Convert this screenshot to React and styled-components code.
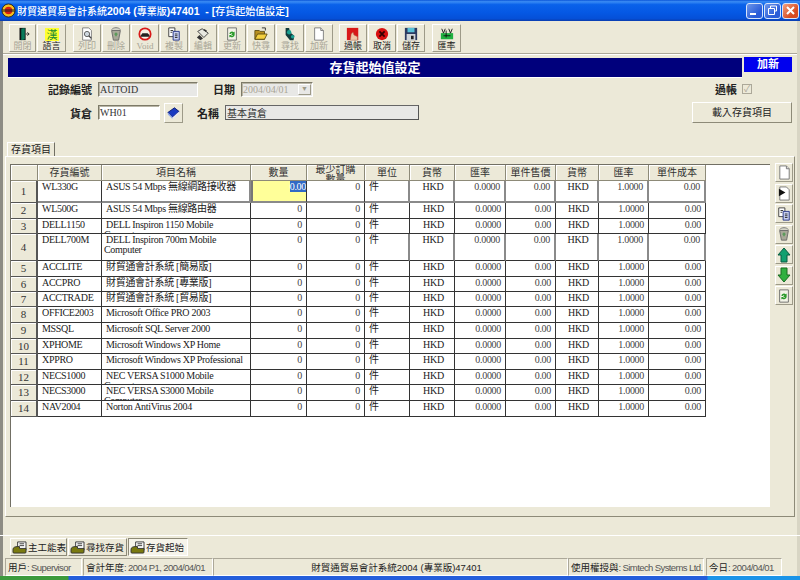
import React from "react";
import styled, { createGlobalStyle } from "styled-components";

const GlobalStyle = createGlobalStyle`
  html, body {
    margin: 0;
    padding: 0;
    width: 800px;
    height: 580px;
    overflow: hidden;
    background: #ece9d8;
  }
  * {
    box-sizing: border-box;
  }
`;

const SERIF = `"Liberation Serif", "Noto Sans CJK TC", serif`;
const SANS = `"Liberation Sans", "Noto Sans CJK TC", sans-serif`;

const Window = styled.div`
  display: flex;
  flex-direction: column;
  width: 800px;
  height: 580px;
  background: #ece9d8;
  font-family: ${SANS};
  font-size: 11px;
  color: #222;
  border-left: 3px solid #8d8c84;
  border-right: 3px solid #d8d5c4;
`;

const TitleBar = styled.div`
  display: flex;
  align-items: center;
  flex: 0 0 21px;
  margin: 0 -3px;
  padding: 0 0 0 1px;
  gap: 1px;
  background: linear-gradient(
    180deg,
    #0a55d8 0%,
    #3a8cf4 8%,
    #0a62ea 22%,
    #0558e4 60%,
    #0550d8 88%,
    #0a3cae 100%
  );
`;

const TitleText = styled.div`
  flex: 1;
  color: #fff;
  font-family: ${SANS};
  font-weight: bold;
  font-size: 10.5px;
  white-space: pre;
`;

const TitleZh = styled.span`
  font-size: 10px;
  font-weight: 500;
`;

const WinControls = styled.div`
  display: flex;
  gap: 1px;
  padding-right: 1px;
`;

const WinButton = styled.div`
  display: flex;
  align-items: center;
  justify-content: center;
  width: 17px;
  height: 16px;
  border: 1px solid #d8e4fa;
  border-radius: 3px;
  background: ${(p) =>
    p.$close
      ? "linear-gradient(135deg, #f0a080, #d84a20 70%)"
      : "linear-gradient(135deg, #6c96ea, #2a5cd8 70%)"};
`;

const Toolbar = styled.div`
  display: flex;
  flex: 0 0 33px;
  padding: 3px 0 0 6px;
  border-bottom: 1px solid #aca899;
  box-shadow: 0 1px 0 #fff;
`;

const ToolGroup = styled.div`
  display: flex;
  gap: 1px;
  margin-right: ${(p) => p.$gap || 0}px;
`;

const ToolButton = styled.div`
  display: flex;
  flex-direction: column;
  align-items: center;
  width: ${(p) => p.$w || 28}px;
  height: 28px;
  padding-top: 2px;
  background: #ece9d8;
  border: 1px solid;
  border-color: #fff #9d9a88 #9d9a88 #fff;
`;

const ToolIcon = styled.div`
  display: flex;
  align-items: center;
  justify-content: center;
  height: 14px;
`;

const ToolLabel = styled.span`
  margin-top: 1px;
  font-family: ${SERIF};
  font-size: 9px;
  line-height: 9px;
  color: ${(p) => (p.$off ? "#a8a596" : "#222")};
`;

const TitleRow = styled.div`
  display: flex;
  align-items: flex-start;
  height: 24px;
  padding: 3px 0 0 5px;
`;

const Banner = styled.div`
  width: 734px;
  height: 20px;
  margin-top: 1px;
  background: #00007c;
  border-bottom: 1px solid #fff;
  color: #fff;
  font-family: ${SERIF};
  font-weight: bold;
  font-size: 13px;
  line-height: 19px;
  text-align: center;
`;

const ModeBadge = styled.div`
  width: 48px;
  height: 15px;
  margin-left: 2px;
  background: #0000ee;
  color: #fff;
  font-family: ${SERIF};
  font-weight: bold;
  font-size: 11px;
  line-height: 14px;
  text-align: center;
`;

const FormRow = styled.div`
  display: flex;
  align-items: center;
  height: ${(p) => p.$h}px;
  padding-right: 5px;
`;

const FieldLabel = styled.span`
  width: ${(p) => p.$w}px;
  margin-right: ${(p) => p.$mr || 6}px;
  text-align: right;
  font-family: ${SERIF};
  font-weight: bold;
  font-size: 11px;
  flex: none;
`;

const Field = styled.div`
  display: flex;
  align-items: center;
  flex: none;
  width: ${(p) => p.$w}px;
  height: 15px;
  margin-right: ${(p) => p.$mr || 0}px;
  padding-left: 1px;
  background: ${(p) => (p.$white ? "#fff" : "#e8e8e6")};
  border: 1px solid;
  border-color: #7d7a68 #fff #fff #7d7a68;
  box-shadow: inset 1px 1px 0 #b8b5a6;
  color: ${(p) => (p.$muted ? "#a8a596" : "#333")};
  font-family: ${SERIF};
  font-size: 10px;
  white-space: nowrap;
`;

const NameField = styled(Field)`
  border-color: #666 #555 #555 #666;
  box-shadow: none;
`;

const DateArrow = styled.span`
  display: flex;
  align-items: center;
  justify-content: center;
  width: 13px;
  height: 11px;
  margin-left: auto;
  margin-right: 1px;
  border: 1px solid;
  border-color: #fff #9d9a88 #9d9a88 #fff;
  color: #9d9a88;
  font-size: 7px;
`;

const Spacer = styled.div`
  flex: 1;
`;

const LookupButton = styled.div`
  display: flex;
  align-items: center;
  justify-content: center;
  width: 19px;
  height: 20px;
  margin: 0 14px 0 4px;
  border: 1px solid;
  border-color: #fff #9d9a88 #9d9a88 #fff;
`;

const CheckBox = styled.div`
  display: flex;
  align-items: center;
  justify-content: center;
  width: 10px;
  height: 10px;
  margin-right: 40px;
  background: #ece9d8;
  border: 1px solid #aca899;
  color: #aca899;
  font-size: 9px;
  line-height: 9px;
`;

const LoadButton = styled.div`
  width: 100px;
  height: 21px;
  border: 1px solid;
  border-color: #fff #8d8a78 #8d8a78 #fff;
  text-align: center;
  font-family: ${SERIF};
  font-size: 10px;
  line-height: 19px;
`;

const TabStrip = styled.div`
  display: flex;
  height: 14px;
  margin-top: 17px;
  padding-left: 4px;
`;

const Tab = styled.div`
  width: 48px;
  height: 14px;
  padding-left: 3px;
  border-right: 1px solid #716f64;
  border-left: 1px solid #fff;
  border-top: 1px solid #fff;
  font-family: ${SERIF};
  font-size: 10px;
  line-height: 13px;
  white-space: nowrap;
`;

const TabPanel = styled.div`
  display: flex;
  flex: none;
  height: 361px;
  margin: 0 2px;
  padding: 7px 2px 9px 4px;
  border: 1px solid;
  border-color: #fff #8d8a78 #8d8a78 #fff;
`;

const Sheet = styled.div`
  flex: none;
  width: 760px;
  height: 343px;
  background: #fff;
  border-top: 1px solid #716f64;
  border-left: 1px solid #716f64;
`;

const Row = styled.div`
  display: grid;
  grid-template-columns: 27px 64px 149px 56px 58px 45px 45px 51px 50px 43px 50px 57px;
  width: 695px;
  height: ${(p) => p.$h}px;
`;

const HeadCell = styled.div`
  overflow: hidden;
  padding: 0 ${(p) => (p.$tall ? "4px" : "0")};
  background: #ece9d8;
  border-right: 1px solid #8d8a78;
  border-bottom: 1px solid #8d8a78;
  box-shadow: inset 1px 1px 0 #fff;
  font-family: ${SERIF};
  font-size: 10px;
  line-height: ${(p) => (p.$tall ? "10px" : "15px")};
  text-align: center;
  color: #333;
`;

const RowHead = styled(HeadCell)`
  display: flex;
  align-items: center;
  justify-content: center;
  border-right: 2px solid #555;
  border-bottom: 1px solid #555;
  font-size: 11px;
`;

const Cell = styled.div`
  overflow: hidden;
  padding: 1px ${(p) => (p.$right ? "4px" : "0")} 0 ${(p) => p.$left ?? 3}px;
  border-right: ${(p) => (p.$soft ? "2px solid #8a8a8a" : "1px solid #333")};
  border-bottom: ${(p) => (p.$softRow ? "2px solid #8a8a8a" : "1px solid #333")};
  font-family: ${SERIF};
  font-size: 10px;
  letter-spacing: -0.3px;
  line-height: 10px;
  text-align: ${(p) => (p.$right ? "right" : p.$center ? "center" : "left")};
  text-indent: ${(p) => p.$indent || 0}px;
  color: ${(p) => (p.$zero ? "#444" : "#222")};
`;

const ActiveCell = styled(Cell)`
  background: #ffff99;
  border-left: 2px solid #777;
  border-bottom: 2px solid #8a8a8a;
  padding-right: 0;
`;

const Selection = styled.span`
  background: #316ac5;
  color: #fff;
`;

const SideButtons = styled.div`
  display: flex;
  flex-direction: column;
  gap: 1.5px;
  margin: -1px 0 0 5px;
`;

const SideButton = styled.div`
  display: flex;
  align-items: center;
  justify-content: center;
  width: 18px;
  height: 19px;
  border: 1px solid;
  border-color: #fff #9d9a88 #9d9a88 #fff;
`;

const DocBar = styled.div`
  display: flex;
  align-items: center;
  gap: 1px;
  flex: 0 0 23px;
  margin: 18px -3px 0;
  padding-left: 10px;
  border-top: 1px solid #fff;
`;

const DocTab = styled.div`
  display: flex;
  align-items: center;
  gap: 1px;
  width: ${(p) => p.$w}px;
  height: 18px;
  padding-left: 1px;
  background: ${(p) => (p.$active ? "#f6f4ea" : "#ece9d8")};
  border: 1px solid;
  border-color: ${(p) =>
    p.$active ? "#8d8a78 #fff #fff #8d8a78" : "#fff #8d8a78 #8d8a78 #fff"};
  font-family: ${SERIF};
  font-size: 9.5px;
  white-space: nowrap;
`;

const StatusBar = styled.div`
  display: flex;
  flex: 0 0 18px;
  margin: 0 -3px;
  padding-left: 5px;
`;

const StatusCell = styled.div`
  flex: ${(p) => (p.$grow ? 1 : "none")};
  width: ${(p) => p.$w}px;
  height: 18px;
  margin-right: ${(p) => p.$mr || 0}px;
  padding-left: ${(p) => (p.$grow ? "12px" : "2px")};
  border: 1px solid;
  border-color: #aca899 #fff #fff #aca899;
  color: #555;
  font-size: 9.5px;
  letter-spacing: -0.6px;
  line-height: 17px;
  white-space: nowrap;
  overflow: hidden;
  text-align: ${(p) => (p.$grow ? "center" : "left")};
`;

const StatusZh = styled.span`
  color: #222;
  letter-spacing: 0;
`;

const Taskbar = styled.div`
  flex: 0 0 4px;
  margin: 0 -3px;
  background: linear-gradient(
    90deg,
    #3c9a3c 0,
    #3c9a3c 68px,
    #245edb 69px,
    #245edb 707px,
    #1b94e8 708px
  );
`;

const Svg = ({ size = 16, children }) => (
  <svg width={size} height={size} viewBox="0 0 16 16">
    {children}
  </svg>
);

const AppIcon = () => (
  <Svg size={15}>
    <circle cx="8" cy="8" r="7" fill="#f4c020" stroke="#222" />
    <circle cx="8" cy="8" r="4" fill="#d82010" />
    <rect x="1" y="6.500" width="14" height="3" fill="#222" opacity="0.55" />
  </Svg>
);

const DoorIcon = () => (
  <Svg size={14}>
    <path d="M4 1h7v14H4z" fill="#111" />
    <path d="M6 2l4-1v13l-4 1z" fill="#0a7a5a" />
    <path d="M11 8h4M13 6l2 2-2 2" stroke="#222" fill="none" />
  </Svg>
);

const LangIcon = () => (
  <svg width="14" height="13" viewBox="0 0 14 13">
    <rect width="14" height="13" fill="#ffff30" />
    <text x="7" y="11" fontSize="11" textAnchor="middle" fill="#1a8a30" fontFamily={SANS}>
      漢
    </text>
  </svg>
);

const PrintIcon = () => (
  <Svg size={14}>
    <path d="M3 1h7l3 3v11H3z" fill="#fff" stroke="#777" />
    <circle cx="8" cy="8" r="3" fill="#cfd8e0" stroke="#555" />
    <path d="M10 10l3 3" stroke="#444" strokeWidth="1.500" />
  </Svg>
);

const TrashIcon = () => (
  <Svg size={14}>
    <path d="M3 4l2 11h6l2-11z" fill="#a8a898" stroke="#666" />
    <path d="M3 3c2-3 8-3 10 0" fill="#d0d0c4" stroke="#777" />
    <path d="M6 8l2-2 2 2-2 3z" fill="#5a9a5a" />
  </Svg>
);

const VoidIcon = () => (
  <Svg size={14}>
    <circle cx="8" cy="8" r="6.500" fill="#f4f0e4" stroke="#d81818" strokeWidth="2" />
    <path d="M3 10l2-3h6l2 2v2H3z" fill="#222" />
  </Svg>
);

const CopyIcon = () => (
  <Svg size={14}>
    <path d="M2 1h7v10H2z" fill="#fff" stroke="#333" />
    <path d="M7 5h7v10H7z" fill="#c8d0f0" stroke="#1a2a80" />
    <path d="M4 4h3M4 6h2M9 8h3M9 10h3M9 12h3" stroke="#222" />
  </Svg>
);

const EditIcon = () => (
  <Svg size={14}>
    <path d="M2 5l5-3 7 5-5 5z" fill="#e8e8e0" stroke="#333" />
    <path d="M4 9l4 4-3 2-4-3z" fill="#333" />
    <path d="M9 3l3 2" stroke="#333" strokeWidth="2" />
  </Svg>
);

const RefreshIcon = () => (
  <Svg size={14}>
    <path d="M3 1h10v14H3z" fill="#f4f4e8" stroke="#666" />
    <path d="M5 8a3 3 0 0 1 5-2l1-1v4H7l1.500-1.500A1.500 1.500 0 0 0 6.500 8z" fill="#2a9a2a" />
    <path d="M11 9a3 3 0 0 1-5 2l-1 1V9h3l-1 1a1.500 1.500 0 0 0 2-1z" fill="#2a9a2a" />
  </Svg>
);

const FolderIcon = () => (
  <Svg size={14}>
    <path d="M1 4h5l1 1h5v9H1z" fill="#b89020" stroke="#5a4a10" />
    <path d="M1 14l3-6h11l-3 6z" fill="#f4d040" stroke="#5a4a10" />
    <path d="M9 1h4v3" stroke="#222" fill="none" />
  </Svg>
);

const FindIcon = () => (
  <Svg size={14}>
    <path d="M3 1h4l1 5 5 4-1 5H8L3 9z" fill="#123c3c" />
    <circle cx="7" cy="6" r="2.500" fill="#18a090" />
    <circle cx="11" cy="11" r="2" fill="#18a090" />
  </Svg>
);

const NewIcon = ({ size = 14 }) => (
  <Svg size={size}>
    <path d="M3 1h7l3 3v11H3z" fill="#fff" stroke="#777" />
    <path d="M10 1v3h3" fill="#ddd" stroke="#777" />
  </Svg>
);

const PostIcon = () => (
  <Svg size={14}>
    <rect x="1" y="1" width="13" height="14" fill="#d81818" />
    <path d="M5 15l1-7 2-2 1 3 4 2v4z" fill="#f0c8a8" stroke="#a87858" strokeWidth="0.5" />
  </Svg>
);

const CancelIcon = () => (
  <Svg size={14}>
    <circle cx="8" cy="8" r="7" fill="#d81010" />
    <path d="M5 5l6 6M11 5l-6 6" stroke="#300" strokeWidth="2" />
  </Svg>
);

const SaveIcon = () => (
  <Svg size={14}>
    <rect x="1" y="1" width="14" height="14" fill="#2c3a60" />
    <rect x="4" y="1" width="8" height="5" fill="#58c0d8" />
    <rect x="3" y="8" width="10" height="7" fill="#d0d4d8" />
    <rect x="8" y="10" width="3" height="4" fill="#222" />
  </Svg>
);

const RateIcon = () => (
  <Svg size={14}>
    <rect x="1" y="7" width="14" height="7" fill="#20b040" />
    <path d="M2 2l2 5 2-5M10 2l2 5 2-5M7 4v8M4 10h8" stroke="#111" fill="none" />
  </Svg>
);

const BookIcon = () => (
  <Svg size={15}>
    <path d="M2 8l7-5 5 4-7 6z" fill="#1a3ac0" stroke="#0c1c70" />
    <path d="M2 8l5 5v2L2 10z" fill="#90a8e8" />
    <path d="M7 13l7-6v2l-7 6z" fill="#e8e8f4" />
  </Svg>
);

const InsertIcon = () => (
  <Svg size={15}>
    <path d="M3 1h7l3 3v11H3z" fill="#fff" stroke="#777" />
    <path d="M2 3l7 4-7 4z" fill="#111" />
  </Svg>
);

const UpIcon = () => (
  <Svg>
    <path d="M8 1l6 7h-3v7H5V8H2z" fill="#12a070" stroke="#0a5a40" />
  </Svg>
);

const DownIcon = () => (
  <Svg>
    <path d="M8 15l6-7h-3V1H5v7H2z" fill="#30b040" stroke="#186a20" />
  </Svg>
);

const DocTabIcon = () => (
  <svg width="15" height="13" viewBox="0 0 16 14">
    <path d="M6 1h9v9H6z" fill="#fff" stroke="#333" />
    <path d="M8 3h5M8 5h5" stroke="#333" />
    <path d="M1 9c0-2 2-3 5-3h2v2h7v4a1 1 0 0 1-1 1H2a1 1 0 0 1-1-1z" fill="#7a7a10" stroke="#333" />
  </svg>
);

const toolGroups = [
  {
    gap: 7,
    items: [
      { Icon: DoorIcon, label: "開閉", off: true, w: 27 },
      { Icon: LangIcon, label: "語言", w: 29 },
    ],
  },
  {
    gap: 6,
    items: [
      { Icon: PrintIcon, label: "列印", off: true },
      { Icon: TrashIcon, label: "刪除", off: true },
      { Icon: VoidIcon, label: "Void", off: true },
      { Icon: CopyIcon, label: "複製", off: true },
      { Icon: EditIcon, label: "編輯", off: true },
      { Icon: RefreshIcon, label: "更新", off: true },
      { Icon: FolderIcon, label: "快尋", off: true },
      { Icon: FindIcon, label: "尋找", off: true },
      { Icon: NewIcon, label: "加新", off: true },
    ],
  },
  {
    gap: 7,
    items: [
      { Icon: PostIcon, label: "過帳" },
      { Icon: CancelIcon, label: "取消" },
      { Icon: SaveIcon, label: "儲存" },
    ],
  },
  { gap: 0, items: [{ Icon: RateIcon, label: "匯率", w: 29 }] },
];

const headers = [
  "",
  "存貨編號",
  "項目名稱",
  "數量",
  "最少訂購數量",
  "單位",
  "貨幣",
  "匯率",
  "單件售價",
  "貨幣",
  "匯率",
  "單件成本",
];

const items = [
  ["WL330G", "ASUS 54 Mbps 無線網路接收器", 22],
  ["WL500G", "ASUS 54 Mbps 無線路由器", 16],
  ["DELL1150", "DELL Inspiron 1150 Mobile Computer", 15],
  ["DELL700M", "DELL Inspiron 700m Mobile Computer", 27],
  ["ACCLITE", "財貿通會計系統 [簡易版]", 16],
  ["ACCPRO", "財貿通會計系統 [專業版]", 15],
  ["ACCTRADE", "財貿通會計系統 [貿易版]", 15],
  ["OFFICE2003", "Microsoft Office PRO 2003", 16],
  ["MSSQL", "Microsoft SQL Server 2000", 16],
  ["XPHOME", "Microsoft Windows XP Home", 15],
  ["XPPRO", "Microsoft Windows XP Professional", 16],
  ["NECS1000", "NEC VERSA S1000 Mobile Computer", 15],
  ["NECS3000", "NEC VERSA S3000 Mobile Computer", 16],
  ["NAV2004", "Norton AntiVirus 2004", 16],
];

const sideIcons = [
  <NewIcon size={15} />,
  <InsertIcon />,
  <CopyIcon />,
  <TrashIcon />,
  <UpIcon />,
  <DownIcon />,
  <RefreshIcon />,
];

const App = () => {
  return (
    <>
      <GlobalStyle />
      <Window>
        <TitleBar>
          <AppIcon />
          <TitleText>
            <TitleZh>財貿通貿易會計系統</TitleZh>2004 (<TitleZh>專業版</TitleZh>)47401  - [
            <TitleZh>存貨起始值設定</TitleZh>]
          </TitleText>
          <WinControls>
            <WinButton>
              <svg width="11" height="11" viewBox="0 0 11 11">
                <rect x="1" y="8" width="6" height="2" fill="#fff" />
              </svg>
            </WinButton>
            <WinButton>
              <svg width="11" height="11" viewBox="0 0 11 11">
                <path d="M3.500 3V1h6v5H8M1.500 3.500h6v6h-6z" fill="none" stroke="#fff" />
              </svg>
            </WinButton>
            <WinButton $close>
              <svg width="11" height="11" viewBox="0 0 11 11">
                <path d="M2 2l7 7M9 2l-7 7" stroke="#fff" strokeWidth="2" />
              </svg>
            </WinButton>
          </WinControls>
        </TitleBar>

        <Toolbar>
          {toolGroups.map((group, g) => (
            <ToolGroup key={g} $gap={group.gap}>
              {group.items.map(({ Icon, label, off, w }) => (
                <ToolButton key={label} $w={w}>
                  <ToolIcon>
                    <Icon />
                  </ToolIcon>
                  <ToolLabel $off={off}>{label}</ToolLabel>
                </ToolButton>
              ))}
            </ToolGroup>
          ))}
        </Toolbar>

        <TitleRow>
          <Banner>存貨起始值設定</Banner>
          <ModeBadge>加新</ModeBadge>
        </TitleRow>

        <FormRow $h={22}>
          <FieldLabel $w={89}>記錄編號</FieldLabel>
          <Field $w={100} $mr={15}>AUTOID</Field>
          <FieldLabel $w={22}>日期</FieldLabel>
          <Field $w={72} $muted>
            2004/04/01
            <DateArrow>▼</DateArrow>
          </Field>
          <Spacer />
          <FieldLabel $w={22} $mr={5}>過帳</FieldLabel>
          <CheckBox>✓</CheckBox>
        </FormRow>

        <FormRow $h={25}>
          <FieldLabel $w={89}>貨倉</FieldLabel>
          <Field $w={62} $white>WH01</Field>
          <LookupButton>
            <BookIcon />
          </LookupButton>
          <FieldLabel $w={22}>名稱</FieldLabel>
          <NameField $w={194}>基本貨倉</NameField>
          <Spacer />
          <LoadButton>載入存貨項目</LoadButton>
        </FormRow>

        <TabStrip>
          <Tab>存貨項目</Tab>
        </TabStrip>

        <TabPanel>
          <Sheet>
            <Row $h={16}>
              {headers.map((h, i) => (
                <HeadCell key={i} $tall={h.length > 4}>
                  {h}
                </HeadCell>
              ))}
            </Row>
            {items.map(([code, name, h], i) => {
              const soft = i === 0 || i === 3;
              const first = i === 0;
              return (
                <Row key={code} $h={h}>
                  <RowHead>{i + 1}</RowHead>
                  <Cell $left={4} $softRow={first}>{code}</Cell>
                  <Cell $left={2} $indent={2} $soft={first} $softRow={first}>{name}</Cell>
                  {first ? (
                    <ActiveCell $right>
                      <Selection>0.00</Selection>
                    </ActiveCell>
                  ) : (
                    <Cell $right $zero>0</Cell>
                  )}
                  <Cell $right $zero $softRow={first}>0</Cell>
                  <Cell $left={4} $soft={soft} $softRow={first}>件</Cell>
                  <Cell $center $soft={soft} $softRow={first}>HKD</Cell>
                  <Cell $right $zero $soft={soft} $softRow={first}>0.0000</Cell>
                  <Cell $right $zero $soft={soft} $softRow={first}>0.00</Cell>
                  <Cell $center $soft={soft} $softRow={first}>HKD</Cell>
                  <Cell $right $zero $soft={soft} $softRow={first}>1.0000</Cell>
                  <Cell $right $zero $soft={soft} $softRow={first}>0.00</Cell>
                </Row>
              );
            })}
          </Sheet>
          <SideButtons>
            {sideIcons.map((icon, i) => (
              <SideButton key={i}>{icon}</SideButton>
            ))}
          </SideButtons>
        </TabPanel>

        <DocBar>
          <DocTab $w={57}>
            <DocTabIcon />
            主工能表
          </DocTab>
          <DocTab $w={59}>
            <DocTabIcon />
            尋找存貨
          </DocTab>
          <DocTab $w={60} $active>
            <DocTabIcon />
            存貨起始
          </DocTab>
        </DocBar>

        <StatusBar>
          <StatusCell $w={77} $mr={1}>
            <StatusZh>用戶</StatusZh>: Supervisor
          </StatusCell>
          <StatusCell $w={130}>
            <StatusZh>會計年度</StatusZh>: 2004 P1, 2004/04/01
          </StatusCell>
          <StatusCell $grow>
            <StatusZh>財貿通貿易會計系統2004 (專業版)47401</StatusZh>
          </StatusCell>
          <StatusCell $w={136} $mr={2}>
            <StatusZh>使用權授與</StatusZh>: Simtech Systems Ltd.
          </StatusCell>
          <StatusCell $w={76} $mr={18}>
            <StatusZh>今日</StatusZh>: 2004/04/01
          </StatusCell>
        </StatusBar>

        <Taskbar />
      </Window>
    </>
  );
};

export default App;
